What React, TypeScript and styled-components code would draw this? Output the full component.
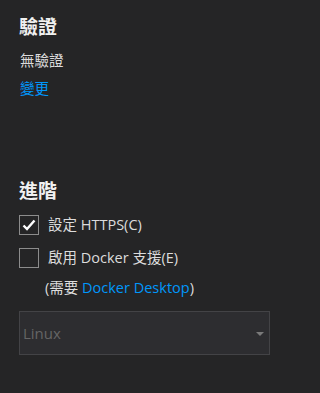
import React from "react";
import styled, { createGlobalStyle } from "styled-components";

const Global = createGlobalStyle`
  html, body { margin: 0; padding: 0; background: #252526; }
  body { width: 320px; height: 393px; overflow: hidden; }
`;

const Page = styled.div`
  display: flex;
  flex-direction: column;
  padding: 14px 0 0 19px;
  font-family: "Segoe UI", "Open Sans", "Noto Sans CJK TC", sans-serif;
  color: #dcdcdc;
`;

const Heading = styled.div<{ $top: number }>`
  font-family: "Noto Sans CJK TC", sans-serif;
  font-size: 19px;
  font-weight: 700;
  line-height: 24px;
  height: 24px;
  color: #f1f1f1;
  margin-top: ${(p) => p.$top}px;
`;

const Line = styled.div<{ $top: number; $indent?: number }>`
  font-size: 14.5px;
  line-height: 20px;
  height: 20px;
  margin-top: ${(p) => p.$top}px;
  margin-left: ${(p) => p.$indent ?? 1}px;
  white-space: nowrap;
`;

const Link = styled.span`
  color: #0097fb;
`;

const CheckRow = styled.label<{ $top: number }>`
  display: flex;
  align-items: center;
  gap: 9px;
  height: 20px;
  margin-top: ${(p) => p.$top}px;
  font-size: 14.5px;
  line-height: 20px;
  white-space: nowrap;
`;

const Box = styled.span`
  box-sizing: border-box;
  width: 20px;
  height: 20px;
  border: 1px solid #8c8c8c;
  display: flex;
  align-items: center;
  justify-content: center;
`;

const Select = styled.div`
  box-sizing: border-box;
  margin-top: 13px;
  width: 251px;
  height: 44px;
  border: 1px solid #434346;
  background: #2d2d30;
  display: flex;
  align-items: center;
  justify-content: space-between;
  padding: 0 5px 0 3px;
  color: #656565;
  font-size: 15px;
`;

const Arrow = styled.span`
  width: 0;
  height: 0;
  border-left: 4px solid transparent;
  border-right: 4px solid transparent;
  border-top: 4px solid #7a7a7a;
  margin-top: 2px;
`;

const Check = () => (
  <svg width="14" height="12" viewBox="0 0 14 12">
    <path d="M1.5 6.5 L5 10 L12.5 1.5" fill="none" stroke="#ffffff" strokeWidth="2.4" />
  </svg>
);

export default function App() {
  return (
    <>
      <Global />
      <Page>
        <Heading $top={0}>驗證</Heading>
        <Line $top={13}>無驗證</Line>
        <Line $top={8}>
          <Link>變更</Link>
        </Line>
        <Heading $top={79}>進階</Heading>
        <CheckRow $top={13}>
          <Box>
            <Check />
          </Box>
          設定 HTTPS(C)
        </CheckRow>
        <CheckRow $top={13}>
          <Box />
          啟用 Docker 支援(E)
        </CheckRow>
        <Line $top={10} $indent={26}>
          (需要 <Link>Docker Desktop</Link>)
        </Line>
        <Select>
          <span>Linux</span>
          <Arrow />
        </Select>
      </Page>
    </>
  );
}
